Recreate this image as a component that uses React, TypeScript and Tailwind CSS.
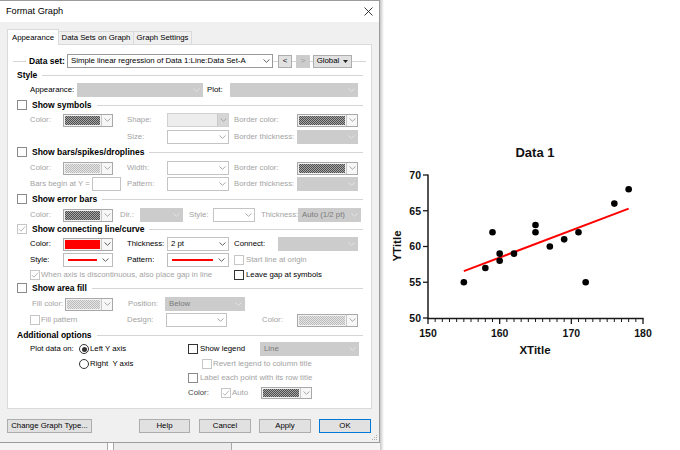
import React from "react";

const F = "font-['Liberation_Sans',Arial,sans-serif]";
const T = "text-[7.8px] leading-none whitespace-nowrap";
const K = `${T} text-black`;
const G = `${T} text-[#a3a3a3]`;
const B = "text-[8.5px] font-bold leading-none whitespace-nowrap text-black";

function Chev({ tone = "mid" }: { tone?: "dark" | "mid" | "light" }) {
  const c = tone === "dark" ? "#505050" : tone === "light" ? "#e6e6e6" : "#a0a0a0";
  return (
    <svg width="7" height="4" viewBox="0 0 7 4" className="shrink-0">
      <path d="M0.5 0.5 L3.5 3.3 L6.5 0.5" fill="none" stroke={c} strokeWidth="0.9" />
    </svg>
  );
}

type SelV = "white" | "gray" | "light" | "frame";
function Select({
  w,
  v = "white",
  text,
  chev,
  h = "h-[14px]",
}: {
  w: string;
  v?: SelV;
  text?: string;
  chev?: "dark" | "mid" | "light";
  h?: string;
}) {
  const box =
    v === "gray"
      ? "bg-[#cccccc] border-[#cccccc]"
      : v === "light"
      ? "bg-[#ededed] border-[#d0d0d0]"
      : v === "frame"
      ? "bg-white border-[#9a9a9a]"
      : "bg-white border-[#c4c4c4]";
  const tc = v === "gray" ? "text-[#7a7a7a]" : "text-black";
  const ch = chev ?? (v === "gray" ? "light" : "mid");
  return (
    <div className={`${w} ${h} shrink-0 flex items-center border ${box}`}>
      <div className={`flex-1 min-w-0 overflow-hidden pl-[3px] ${T} ${tc}`}>{text}</div>
      {v === "light" ? (
        <div className="w-[11px] h-full flex items-center justify-center bg-[#d6d6d6] border-l border-[#c8c8c8]">
          <Chev tone="mid" />
        </div>
      ) : (
        <div className="w-[12px] h-full flex items-center justify-center">
          <Chev tone={ch} />
        </div>
      )}
    </div>
  );
}

function Swatch({ w, fill, h = "h-[13px]" }: { w: string; fill: "dark" | "light" | "red"; h?: string }) {
  const f =
    fill === "red"
      ? "bg-[#ff0000]"
      : fill === "dark"
      ? "bg-[image:repeating-conic-gradient(#4e4e4e_0%_25%,#a6a6a6_0%_50%)] bg-[length:2px_2px]"
      : "bg-[image:repeating-conic-gradient(#bcbcbc_0%_25%,#e4e4e4_0%_50%)] bg-[length:2px_2px]";
  return (
    <div className={`${w} ${h} shrink-0 flex border border-[#a8a8a8] bg-[#f2f2f2]`}>
      <div className={`flex-1 m-px ${f}`} />
      <div className="w-[11px] flex items-center justify-center border-l border-[#c8c8c8] bg-[#f7f7f7]">
        <Chev tone={fill === "red" ? "dark" : "mid"} />
      </div>
    </div>
  );
}

function LineSel({ w }: { w: string }) {
  return (
    <div className={`${w} h-[14px] shrink-0 flex items-center border border-[#bdbdbd] bg-white pl-[4px] pr-[3px]`}>
      <div className="flex-1 h-[2px] bg-[#ff0000]" />
      <div className="w-[12px] flex justify-end">
        <Chev tone="dark" />
      </div>
    </div>
  );
}

function Box({ tone = "dark", checked = false }: { tone?: "dark" | "mid" | "dis"; checked?: boolean }) {
  const b = tone === "dark" ? "border-[#333333]" : tone === "mid" ? "border-[#8a8a8a]" : "border-[#c6c6c6]";
  const s = tone === "dis" ? "#b8b8b8" : "#333333";
  return (
    <div className={`w-[10px] h-[10px] shrink-0 border bg-white flex items-center justify-center ${b}`}>
      {checked && (
        <svg width="8" height="8" viewBox="0 0 8 8">
          <path d="M1 4.2 L3 6.2 L7 1.6" fill="none" stroke={s} strokeWidth="1" />
        </svg>
      )}
    </div>
  );
}

function Radio({ on = false }: { on?: boolean }) {
  return (
    <div className="w-[10px] h-[10px] shrink-0 rounded-full border border-[#333333] bg-white flex items-center justify-center">
      {on && <div className="w-[5px] h-[5px] rounded-full bg-[#333333]" />}
    </div>
  );
}

function Header({ label, check, mt }: { label: string; check: "off" | "on" | "none"; mt: string }) {
  return (
    <div className={`flex items-center h-[12px] pl-[9px] pr-[8px] ${mt}`}>
      {check === "off" && <Box tone="mid" />}
      {check === "on" && <Box tone="dis" checked />}
      <span className={`${B} ${check === "none" ? "" : "ml-[5px]"}`}>{label}</span>
      <div className="flex-1 h-px bg-[#d5d5d5] ml-[5px]" />
    </div>
  );
}

function MiniBtn({ w, dis = false, children }: { w: string; dis?: boolean; children: React.ReactNode }) {
  return (
    <div
      className={`${w} h-[13px] shrink-0 flex items-center justify-center border ${T} ${
        dis ? "bg-[#cccccc] border-[#cccccc] text-[#9a9a9a]" : "bg-[#e1e1e1] border-[#adadad] text-black"
      }`}
    >
      {children}
    </div>
  );
}

function DlgBtn({ w, ok = false, children }: { w: string; ok?: boolean; children: React.ReactNode }) {
  return (
    <div
      className={`${w} h-[14px] shrink-0 flex items-center justify-center border bg-[#e1e1e1] ${K} ${
        ok ? "border-[#0078d7]" : "border-[#adadad]"
      }`}
    >
      {children}
    </div>
  );
}

function Panel() {
  return (
    <div className="ml-[7px] w-[365px] h-[365px] border border-[#d9d9d9] bg-white flex flex-col">
      {/* Data set */}
      <div className="flex items-center h-[14px] mt-[9px] pl-[5px]">
        <div className="w-[13px] h-px bg-[#d5d5d5] shrink-0" />
        <span className={`${B} ml-[3px] w-[38px] shrink-0`}>Data set:</span>
        <Select w="w-[206px]" v="frame" chev="dark" text="Simple linear regression of Data 1:Line:Data Set-A" />
        <div className="w-[5px] h-px bg-[#d5d5d5] shrink-0" />
        <MiniBtn w="w-[14px]">&lt;</MiniBtn>
        <div className="w-[4px] h-px bg-[#d5d5d5] shrink-0" />
        <MiniBtn w="w-[14px]" dis>
          &gt;
        </MiniBtn>
        <div className="w-[3px] h-px bg-[#d5d5d5] shrink-0" />
        <MiniBtn w="w-[39px]">
          <span>Global</span>
          <svg width="5" height="3" viewBox="0 0 5 3" className="ml-[4px]">
            <path d="M0 0 L5 0 L2.5 3 Z" fill="#222" />
          </svg>
        </MiniBtn>
        <div className="flex-1 h-px bg-[#d5d5d5] mr-[5px]" />
      </div>

      <Header label="Style" check="none" mt="mt-[1px]" />

      <div className="flex items-center h-[14px] mt-[2px] pl-[22px]">
        <span className={`${K} w-[47px] shrink-0`}>Appearance:</span>
        <Select w="w-[126px]" v="gray" />
        <span className={`${K} ml-[4px] w-[23px] shrink-0`}>Plot:</span>
        <Select w="w-[128px]" v="gray" />
      </div>

      <Header label="Show symbols" check="off" mt="mt-[2px]" />

      <div className="flex items-center h-[14px] mt-[2px] pl-[22px]">
        <span className={`${G} w-[33px] shrink-0`}>Color:</span>
        <Swatch w="w-[50px]" fill="dark" />
        <span className={`${G} ml-[14px] w-[40px] shrink-0`}>Shape:</span>
        <Select w="w-[62px]" v="light" />
        <span className={`${G} ml-[5px] w-[63px] shrink-0`}>Border color:</span>
        <Swatch w="w-[61px]" fill="dark" />
      </div>

      <div className="flex items-center h-[14px] mt-[3px] pl-[119px]">
        <span className={`${G} w-[40px] shrink-0`}>Size:</span>
        <Select w="w-[62px]" />
        <span className={`${G} ml-[5px] w-[63px] shrink-0`}>Border thickness:</span>
        <Select w="w-[61px]" v="gray" />
      </div>

      <Header label="Show bars/spikes/droplines" check="off" mt="mt-[2px]" />

      <div className="flex items-center h-[14px] mt-[3px] pl-[22px]">
        <span className={`${G} w-[33px] shrink-0`}>Color:</span>
        <Swatch w="w-[50px]" fill="light" />
        <span className={`${G} ml-[14px] w-[40px] shrink-0`}>Width:</span>
        <Select w="w-[62px]" />
        <span className={`${G} ml-[5px] w-[63px] shrink-0`}>Border color:</span>
        <Swatch w="w-[61px]" fill="dark" />
      </div>

      <div className="flex items-center h-[14px] mt-[2px] pl-[22px]">
        <span className={`${G} w-[62px] shrink-0`}>Bars begin at Y =</span>
        <div className="w-[29px] h-[14px] shrink-0 border border-[#c4c4c4] bg-white" />
        <span className={`${G} ml-[6px] w-[40px] shrink-0`}>Pattern:</span>
        <Select w="w-[62px]" />
        <span className={`${G} ml-[5px] w-[63px] shrink-0`}>Border thickness:</span>
        <Select w="w-[61px]" v="gray" />
      </div>

      <Header label="Show error bars" check="off" mt="mt-[2px]" />

      <div className="flex items-center h-[14px] mt-[3px] pl-[22px]">
        <span className={`${G} w-[33px] shrink-0`}>Color:</span>
        <Swatch w="w-[50px]" fill="dark" />
        <span className={`${G} ml-[7px] w-[20px] shrink-0`}>Dir.:</span>
        <Select w="w-[43px]" v="gray" />
        <span className={`${G} ml-[6px] w-[24px] shrink-0`}>Style:</span>
        <Select w="w-[42px]" />
        <span className={`${G} ml-[6px] w-[37px] shrink-0`}>Thickness:</span>
        <Select w="w-[63px]" v="gray" text="Auto (1/2 pt)" />
      </div>

      <Header label="Show connecting line/curve" check="on" mt="mt-[1px]" />

      <div className="flex items-center h-[14px] mt-[2px] pl-[22px]">
        <span className={`${K} w-[33px] shrink-0`}>Color:</span>
        <Swatch w="w-[50px]" fill="red" />
        <span className={`${K} ml-[14px] w-[40px] shrink-0`}>Thickness:</span>
        <Select w="w-[62px]" chev="dark" text="2 pt" />
        <span className={`${K} ml-[5px] w-[44px] shrink-0`}>Connect:</span>
        <Select w="w-[80px]" v="gray" />
      </div>

      <div className="flex items-center h-[14px] mt-[2px] pl-[22px]">
        <span className={`${K} w-[33px] shrink-0`}>Style:</span>
        <LineSel w="w-[50px]" />
        <span className={`${K} ml-[14px] w-[40px] shrink-0`}>Pattern:</span>
        <LineSel w="w-[62px]" />
        <div className="ml-[5px]">
          <Box tone="dis" />
        </div>
        <span className={`${G} ml-[2px]`}>Start line at origin</span>
      </div>

      <div className="flex items-center h-[12px] mt-[2px]">
        <div className="w-[226px] shrink-0 flex items-center pl-[22px]">
          <Box tone="dis" checked />
          <span className={`${G} ml-[1px]`}>When axis is discontinuous, also place gap in line</span>
        </div>
        <Box tone="dark" />
        <span className={`${K} ml-[2px]`}>Leave gap at symbols</span>
      </div>

      <Header label="Show area fill" check="off" mt="mt-[1px]" />

      <div className="flex items-center h-[14px] mt-[3px] pl-[24px]">
        <span className={`${G} w-[33px] shrink-0`}>Fill color:</span>
        <Swatch w="w-[48px]" fill="light" />
        <span className={`${G} ml-[15px] w-[37px] shrink-0`}>Position:</span>
        <Select w="w-[80px]" v="gray" text="Below" />
      </div>

      <div className="flex items-center h-[14px] mt-[2px] pl-[22px]">
        <Box tone="dis" />
        <span className={`${G} ml-[1px] w-[86px] shrink-0`}>Fill pattern</span>
        <span className={`${G} w-[39px] shrink-0`}>Design:</span>
        <Select w="w-[61px]" />
        <span className={`${G} ml-[35px] w-[35px] shrink-0`}>Color:</span>
        <Swatch w="w-[61px]" fill="light" />
      </div>

      <Header label="Additional options" check="none" mt="mt-[2px]" />

      <div className="flex items-center h-[14px] mt-[1px]">
        <div className="w-[180px] shrink-0 flex items-center pl-[22px]">
          <span className={`${K} w-[49px] shrink-0`}>Plot data on:</span>
          <Radio on />
          <span className={`${K} ml-[1px]`}>Left Y axis</span>
        </div>
        <Box tone="dark" />
        <span className={`${K} ml-[2px] w-[60px] shrink-0`}>Show legend</span>
        <Select w="w-[99px]" v="gray" text="Line" />
      </div>

      <div className="flex items-center h-[14px] mt-[1px]">
        <div className="w-[180px] shrink-0 flex items-center pl-[71px]">
          <Radio />
          <span className={`${K} ml-[1px] whitespace-pre`}>{"Right  Y axis"}</span>
        </div>
        <div className="ml-[14px]">
          <Box tone="dis" />
        </div>
        <span className={`${G} ml-[1px]`}>Revert legend to column title</span>
      </div>

      <div className="flex items-center h-[12px] mt-[1px]">
        <div className="w-[180px] shrink-0" />
        <Box tone="mid" />
        <span className={`${G} ml-[2px]`}>Label each point with its row title</span>
      </div>

      <div className="flex items-center h-[12px] mt-[3px]">
        <div className="w-[180px] shrink-0" />
        <span className={`${T} text-[#444444] w-[33px] shrink-0`}>Color:</span>
        <Box tone="dis" checked />
        <span className={`${G} ml-[1px] w-[29px] shrink-0`}>Auto</span>
        <Swatch w="w-[51px]" fill="dark" h="h-[12px]" />
      </div>
    </div>
  );
}

function Dialog() {
  return (
    <div className="relative h-[443px] bg-[#f0f0f0] border-t border-r border-b border-[#9c9c9c] flex flex-col">
      <div className="h-[21px] bg-white flex items-center justify-between pl-[6px] pr-[6px]">
        <span className="text-[9.2px] leading-none text-black">Format Graph</span>
        <svg width="9" height="9" viewBox="0 0 9 9">
          <path d="M0.5 0.5 L8.5 8.5 M8.5 0.5 L0.5 8.5" stroke="#222" strokeWidth="0.9" />
        </svg>
      </div>

      <div className="relative z-10 flex items-end h-[15px] mt-[7px] pl-[7px]">
        <div className={`w-[52px] h-[16px] mb-[-1px] bg-white border-l border-t border-r border-[#d9d9d9] flex items-center justify-center ${K}`}>
          Appearance
        </div>
        <div className={`w-[75px] h-[13px] border-t border-r border-[#d9d9d9] flex items-center justify-center ${K}`}>
          Data Sets on Graph
        </div>
        <div className={`w-[58px] h-[13px] border-t border-r border-[#d9d9d9] flex items-center justify-center ${K}`}>
          Graph Settings
        </div>
      </div>

      <Panel />

      <div className="flex items-center mt-[10px] pl-[7px]">
        <DlgBtn w="w-[85px]">Change Graph Type...</DlgBtn>
        <div className="ml-[47px]">
          <DlgBtn w="w-[51px]">Help</DlgBtn>
        </div>
        <div className="ml-[9px]">
          <DlgBtn w="w-[52px]">Cancel</DlgBtn>
        </div>
        <div className="ml-[8px]">
          <DlgBtn w="w-[52px]">Apply</DlgBtn>
        </div>
        <div className="ml-[8px]">
          <DlgBtn w="w-[52px]" ok>
            OK
          </DlgBtn>
        </div>
      </div>

      <svg width="6" height="6" viewBox="0 0 6 6" className="absolute right-[1px] bottom-[1px]">
        <rect x="4" y="0" width="1" height="1" fill="#b0b0b0" />
        <rect x="2" y="2" width="1" height="1" fill="#b0b0b0" />
        <rect x="4" y="2" width="1" height="1" fill="#b0b0b0" />
        <rect x="0" y="4" width="1" height="1" fill="#b0b0b0" />
        <rect x="2" y="4" width="1" height="1" fill="#b0b0b0" />
        <rect x="4" y="4" width="1" height="1" fill="#b0b0b0" />
      </svg>
    </div>
  );
}

function BottomStrip() {
  return (
    <div className="h-[7px] flex">
      <div className="w-[107px] bg-[#f4f4f4]" />
      <div className="w-px bg-[#a8a8a8]" />
      <div className="w-[5px] bg-white" />
      <div className="w-px bg-[#a8a8a8]" />
      <div className="w-[117px] bg-[#ececec]" />
      <div className="w-px bg-[#a8a8a8]" />
      <div className="flex-1 bg-[#f4f4f4]" />
    </div>
  );
}

const pts: [number, number][] = [
  [155, 55], [158, 57], [159, 62], [160, 59], [160, 58], [162, 59], [165, 63],
  [165, 62], [167, 60], [169, 61], [171, 62], [172, 55], [176, 66], [178, 68],
];
const sx = (v: number) => 48 + (v - 150) * (215 / 30);
const sy = (v: number) => 175 + (70 - v) * (143 / 20);
const FF = "Liberation Sans, Arial, sans-serif";

function Chart() {
  const xt = Array.from({ length: 31 }, (_, i) => 150 + i);
  const yt = [50, 55, 60, 65, 70];
  return (
    <svg width="300" height="450" viewBox="0 0 300 450" className="block">
      <text x="155" y="156.6" textAnchor="middle" fontSize="13" fontWeight="700" fill="#111" fontFamily={FF}>
        Data 1
      </text>
      <line x1="48" y1="174.5" x2="48" y2="319" stroke="#1a1a1a" strokeWidth="1.5" />
      <line x1="47.3" y1="318.5" x2="263.7" y2="318.5" stroke="#1a1a1a" strokeWidth="1.5" />
      {yt.map((v) => (
        <g key={v}>
          <line x1="43" y1={sy(v)} x2="48" y2={sy(v)} stroke="#1a1a1a" strokeWidth="1.3" />
          <text x="41" y={sy(v) + 3.8} textAnchor="end" fontSize="10.5" fontWeight="700" fill="#111" fontFamily={FF}>
            {v}
          </text>
        </g>
      ))}
      {xt.map((v) => (
        <line
          key={v}
          x1={sx(v)}
          y1="318.5"
          x2={sx(v)}
          y2={v % 10 === 0 ? 324 : 322}
          stroke="#1a1a1a"
          strokeWidth={v % 10 === 0 ? 1.3 : 1}
        />
      ))}
      {[150, 160, 170, 180].map((v) => (
        <text key={v} x={sx(v)} y="336.8" textAnchor="middle" fontSize="10.5" fontWeight="700" fill="#111" fontFamily={FF}>
          {v}
        </text>
      ))}
      <text x="155" y="354" textAnchor="middle" fontSize="11.5" fontWeight="700" fill="#111" fontFamily={FF}>
        XTitle
      </text>
      <text
        x="21"
        y="246"
        textAnchor="middle"
        fontSize="11.5"
        fontWeight="700"
        fill="#111"
        fontFamily={FF}
        transform="rotate(-90 21 246)"
      >
        YTitle
      </text>
      <line x1={sx(155)} y1={sy(56.55)} x2={sx(178)} y2={sy(65.3)} stroke="#ff0000" strokeWidth="2" />
      {pts.map(([x, y], i) => (
        <circle key={i} cx={sx(x)} cy={sy(y)} r="3.3" fill="#000" />
      ))}
    </svg>
  );
}

export default function App() {
  return (
    <div className={`w-[680px] h-[450px] flex bg-white overflow-hidden ${F}`}>
      <div className="w-[380px] shrink-0 flex flex-col">
        <Dialog />
        <BottomStrip />
      </div>
      <div className="flex-1 bg-[image:linear-gradient(to_right,#c6c6c6_0px,#ffffff_4px)]">
        <Chart />
      </div>
    </div>
  );
}
